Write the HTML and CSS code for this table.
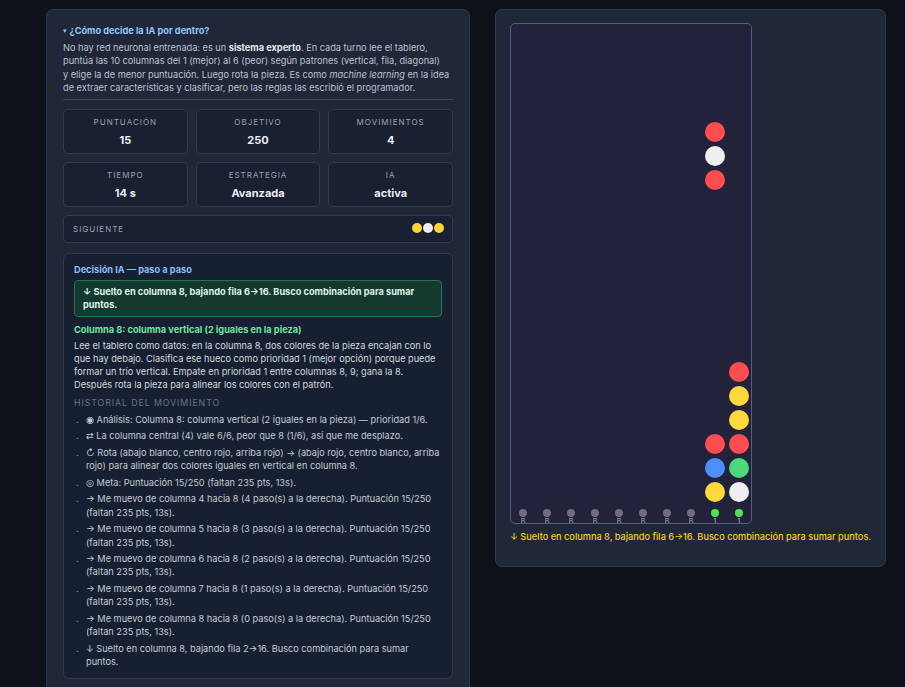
FILE: index.html
```html
<!DOCTYPE html>
<html lang="es">
<head>
<meta charset="utf-8">
<title>IA por dentro</title>
<link rel="stylesheet" href="styles.css">
</head>
<body>
<div class="page">
  <section class="panel left">
    <div class="about">
      <div class="about-title"><span class="caret">▾</span>¿Cómo decide la IA por dentro?</div>
      <p class="about-text">No hay red neuronal entrenada: es un <b>sistema experto</b>. En cada turno lee el tablero, puntúa las 10 columnas del 1 (mejor) al 6 (peor) según patrones (vertical, fila, diagonal)<br>y elige la de menor puntuación. Luego rota la pieza. Es como <i>machine learning</i> en la idea de extraer características y clasificar, pero las reglas las escribió el programador.</p>
    </div>

    <div class="stats">
      <div class="stat"><div class="stat-label">PUNTUACIÓN</div><div class="stat-value">15</div></div>
      <div class="stat"><div class="stat-label">OBJETIVO</div><div class="stat-value">250</div></div>
      <div class="stat"><div class="stat-label">MOVIMIENTOS</div><div class="stat-value">4</div></div>
      <div class="stat"><div class="stat-label">TIEMPO</div><div class="stat-value">14 s</div></div>
      <div class="stat"><div class="stat-label">ESTRATEGIA</div><div class="stat-value">Avanzada</div></div>
      <div class="stat"><div class="stat-label">IA</div><div class="stat-value">activa</div></div>
    </div>

    <div class="next">
      <span class="next-label">SIGUIENTE</span>
      <span class="next-dots"><i class="nd yellow"></i><i class="nd white"></i><i class="nd yellow"></i></span>
    </div>

    <div class="decision">
      <div class="dec-title">Decisión IA — paso a paso</div>
      <div class="dec-action">↓ Suelto en columna 8, bajando fila 6→16. Busco combinación para sumar puntos.</div>
      <div class="dec-head">Columna 8: columna vertical (2 iguales en la pieza)</div>
      <p class="dec-text">Lee el tablero como datos: en la columna 8, dos colores de la pieza encajan con lo que hay debajo. Clasifica ese hueco como prioridad 1 (mejor opción) porque puede formar un trío vertical. Empate en prioridad 1 entre columnas 8, 9; gana la 8. Después rota la pieza para alinear los colores con el patrón.</p>
      <div class="hist-label">HISTORIAL DEL MOVIMIENTO</div>
      <ul class="hist">
        <li>◉ Análisis: Columna 8: columna vertical (2 iguales en la pieza) — prioridad 1/6.</li>
        <li>⇄ La columna central (4) vale 6/6, peor que 8 (1/6), así que me desplazo.</li>
        <li>↻ Rota (abajo blanco, centro rojo, arriba rojo) → (abajo rojo, centro blanco, arriba rojo) para alinear dos colores iguales en vertical en columna 8.</li>
        <li>◎ Meta: Puntuación 15/250 (faltan 235 pts, 13s).</li>
        <li>→ Me muevo de columna 4 hacia 8 (4 paso(s) a la derecha). Puntuación 15/250 (faltan 235 pts, 13s).</li>
        <li>→ Me muevo de columna 5 hacia 8 (3 paso(s) a la derecha). Puntuación 15/250 (faltan 235 pts, 13s).</li>
        <li>→ Me muevo de columna 6 hacia 8 (2 paso(s) a la derecha). Puntuación 15/250 (faltan 235 pts, 13s).</li>
        <li>→ Me muevo de columna 7 hacia 8 (1 paso(s) a la derecha). Puntuación 15/250 (faltan 235 pts, 13s).</li>
        <li>→ Me muevo de columna 8 hacia 8 (0 paso(s) a la derecha). Puntuación 15/250 (faltan 235 pts, 13s).</li>
        <li>↓ Suelto en columna 8, bajando fila 2→16. Busco combinación para sumar puntos.</li>
      </ul>
    </div>
  </section>

  <section class="panel right">
    <div class="board">
      <div class="grid">
        <i class="piece red" style="grid-area: 5 / 9"></i>
        <i class="piece white" style="grid-area: 6 / 9"></i>
        <i class="piece red" style="grid-area: 7 / 9"></i>
        <i class="piece red" style="grid-area: 15 / 10"></i>
        <i class="piece yellow" style="grid-area: 16 / 10"></i>
        <i class="piece yellow" style="grid-area: 17 / 10"></i>
        <i class="piece red" style="grid-area: 18 / 9"></i>
        <i class="piece red" style="grid-area: 18 / 10"></i>
        <i class="piece blue" style="grid-area: 19 / 9"></i>
        <i class="piece green" style="grid-area: 19 / 10"></i>
        <i class="piece yellow" style="grid-area: 20 / 9"></i>
        <i class="piece white" style="grid-area: 20 / 10"></i>
      </div>
      <div class="labels">
        <div class="lab"><i class="ldot"></i><span>B</span></div>
        <div class="lab"><i class="ldot"></i><span>B</span></div>
        <div class="lab"><i class="ldot"></i><span>B</span></div>
        <div class="lab"><i class="ldot"></i><span>B</span></div>
        <div class="lab"><i class="ldot"></i><span>B</span></div>
        <div class="lab"><i class="ldot"></i><span>B</span></div>
        <div class="lab"><i class="ldot"></i><span>B</span></div>
        <div class="lab"><i class="ldot"></i><span>B</span></div>
        <div class="lab good"><i class="ldot"></i><span>1</span></div>
        <div class="lab good"><i class="ldot"></i><span>1</span></div>
      </div>
    </div>
    <p class="caption">↓ Suelto en columna 8, bajando fila 6→16. Busco combinación para sumar puntos.</p>
  </section>
</div>
</body>
</html>
```

FILE: styles.css
```css
* { box-sizing: border-box; }

body {
  margin: 0;
  background: #0f111a;
  font-family: Inter, "Noto Sans", "DejaVu Sans", sans-serif;
  font-size: 9.2px;
  line-height: 13.3px;
  color: #c3c9d3;
}

.page {
  display: flex;
  align-items: flex-start;
  gap: 25px;
  padding: 9px 19px 0 46px;
}

.panel {
  background: #1f2739;
  border: 1px solid #2f3a50;
  border-radius: 7px;
}

.left {
  width: 424px;
  flex: none;
  padding: 14px 16px 16px;
}

.right {
  width: 391px;
  flex: none;
  padding: 13px 14px 23px;
}

/* About */
.about {
  border-bottom: 1px solid #38445a;
  padding-bottom: 5px;
}

.about-title {
  color: #93c5fd;
  font-weight: 700;
  line-height: 13.5px;
}

.caret {
  display: inline-block;
  font-size: 7px;
  margin-right: 3px;
  vertical-align: 1px;
}

.about-text {
  margin: 3.5px 0 0;
  color: #bcc3ce;
}

.about-text b {
  color: #e5e7eb;
  font-weight: 700;
}

/* Stats */
.stats {
  margin-top: 9px;
  display: grid;
  grid-template-columns: repeat(3, 1fr);
  gap: 8px;
}

.stat {
  background: #182032;
  border: 1px solid #2f3b52;
  border-radius: 5px;
  padding: 7px 6px 6px;
  text-align: center;
}

.stat-label {
  font-size: 8px;
  line-height: 11px;
  letter-spacing: 1px;
  color: #9aa3b2;
}

.stat-value {
  margin-top: 5px;
  font-size: 11px;
  line-height: 14px;
  font-weight: 700;
  color: #eceef2;
}

/* Next */
.next {
  margin-top: 8px;
  height: 28px;
  background: #182032;
  border: 1px solid #2f3b52;
  border-radius: 5px;
  padding: 0 8px 0 9px;
  display: flex;
  align-items: center;
  justify-content: space-between;
}

.next-label {
  font-size: 8px;
  letter-spacing: 1px;
  color: #9aa3b2;
}

.next-dots {
  display: flex;
  gap: 1px;
  margin-top: -3px;
}

.nd {
  display: block;
  width: 10px;
  height: 10px;
  border-radius: 50%;
}

.nd.yellow { background: #fcd535; }
.nd.white { background: #eeeeee; }

/* Decision */
.decision {
  margin-top: 10px;
  background: #172032;
  border: 1px solid #2e3a4f;
  border-radius: 6px;
  padding: 9px 10px 10px;
}

.dec-title {
  color: #8ebcf7;
  font-weight: 700;
  line-height: 13.5px;
}

.dec-action {
  margin-top: 3px;
  background: #15392f;
  border: 1px solid #1f7a4a;
  border-radius: 4px;
  padding: 4px 8px;
  color: #dff3e7;
  font-weight: 700;
  line-height: 13.5px;
}

.dec-head {
  margin-top: 6px;
  color: #6ee7a0;
  font-weight: 700;
  line-height: 13.5px;
}

.dec-text {
  margin: 2.5px 0 0;
  color: #d4d8de;
  line-height: 13px;
}

.hist-label {
  margin-top: 6px;
  font-size: 8.8px;
  line-height: 11px;
  letter-spacing: 0.9px;
  color: #697386;
}

.hist {
  list-style: none;
  margin: 5px 0 0;
  padding: 0;
}

.hist li {
  display: flex;
  margin-bottom: 3.3px;
  color: #c5cad3;
}

.hist li:last-child { margin-bottom: 0; }

.hist li::before {
  content: ".";
  flex: none;
  width: 10px;
  padding-left: 2px;
  color: #8a93a3;
}

/* Board */
.board {
  width: 242px;
  background: #22233a;
  border: 1px solid #595d85;
  border-radius: 5px;
  overflow: hidden;
}

.grid {
  display: grid;
  grid-template-columns: repeat(10, 24px);
  grid-template-rows: repeat(20, 24px);
}

.piece {
  display: block;
  width: 20px;
  height: 20px;
  margin: 2px;
  border-radius: 50%;
}

.piece.red { background: #ff4d50; }
.piece.white { background: #efefef; }
.piece.yellow { background: #ffd93b; }
.piece.blue { background: #4d8eff; }
.piece.green { background: #4cd97b; }

.labels {
  display: grid;
  grid-template-columns: repeat(10, 24px);
  height: 19px;
  overflow: hidden;
}

.lab {
  display: flex;
  flex-direction: column;
  align-items: center;
}

.ldot {
  display: block;
  width: 8px;
  height: 8px;
  margin-top: 5px;
  border-radius: 50%;
  background: #6e6f78;
}

.lab span {
  margin-top: 1px;
  font-size: 7px;
  line-height: 8px;
  color: #b4b6be;
}

.lab.good .ldot { background: #4ee54e; }

.caption {
  margin: 6px 0 0;
  color: #facc15;
  font-weight: 500;
  line-height: 13.3px;
  white-space: nowrap;
}
```
